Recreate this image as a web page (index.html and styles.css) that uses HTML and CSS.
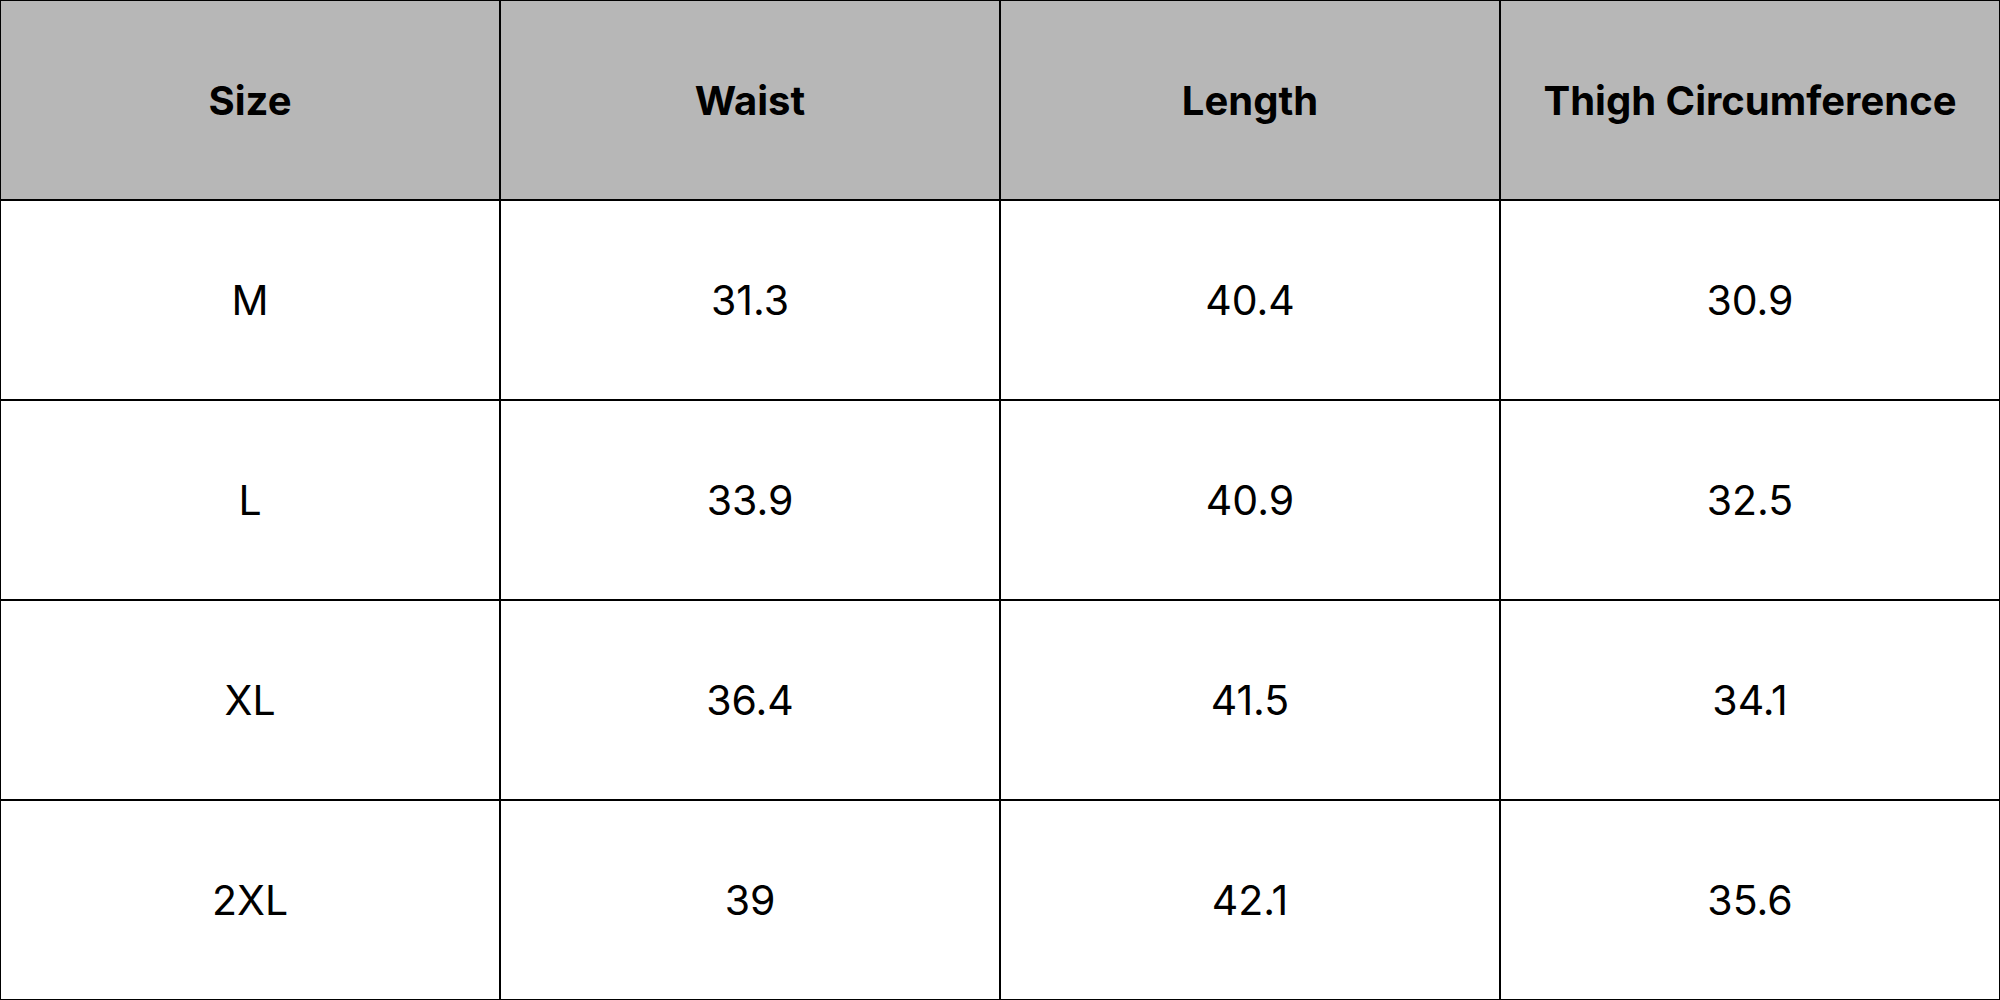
FILE: index.html
```html
<!DOCTYPE html>
<html>
<head>
<meta charset="utf-8">
<link rel="stylesheet" href="styles.css">
</head>
<body>
<div class="table">
  <div class="cell head">Size</div>
  <div class="cell head">Waist</div>
  <div class="cell head">Length</div>
  <div class="cell head">Thigh Circumference</div>
  <div class="cell">M</div>
  <div class="cell">31.3</div>
  <div class="cell">40.4</div>
  <div class="cell">30.9</div>
  <div class="cell">L</div>
  <div class="cell">33.9</div>
  <div class="cell">40.9</div>
  <div class="cell">32.5</div>
  <div class="cell">XL</div>
  <div class="cell">36.4</div>
  <div class="cell">41.5</div>
  <div class="cell">34.1</div>
  <div class="cell">2XL</div>
  <div class="cell">39</div>
  <div class="cell">42.1</div>
  <div class="cell">35.6</div>
</div>
</body>
</html>
```
FILE: styles.css
```css
html, body {
  margin: 0;
  padding: 0;
  background: #ffffff;
}
.table {
  width: 2000px;
  height: 1000px;
  box-sizing: border-box;
  padding: 1px;
  background: #000000;
  display: grid;
  grid-template-columns: repeat(4, 1fr);
  grid-template-rows: repeat(5, 1fr);
  gap: 2px;
  font-family: "Inter", "Open Sans", sans-serif;
}
.cell {
  background: #ffffff;
  color: #000000;
  display: flex;
  align-items: center;
  justify-content: center;
  font-size: 41px;
  font-weight: 400;
}
.head {
  background: #b7b7b7;
  font-size: 40px;
  font-weight: 700;
}
```
